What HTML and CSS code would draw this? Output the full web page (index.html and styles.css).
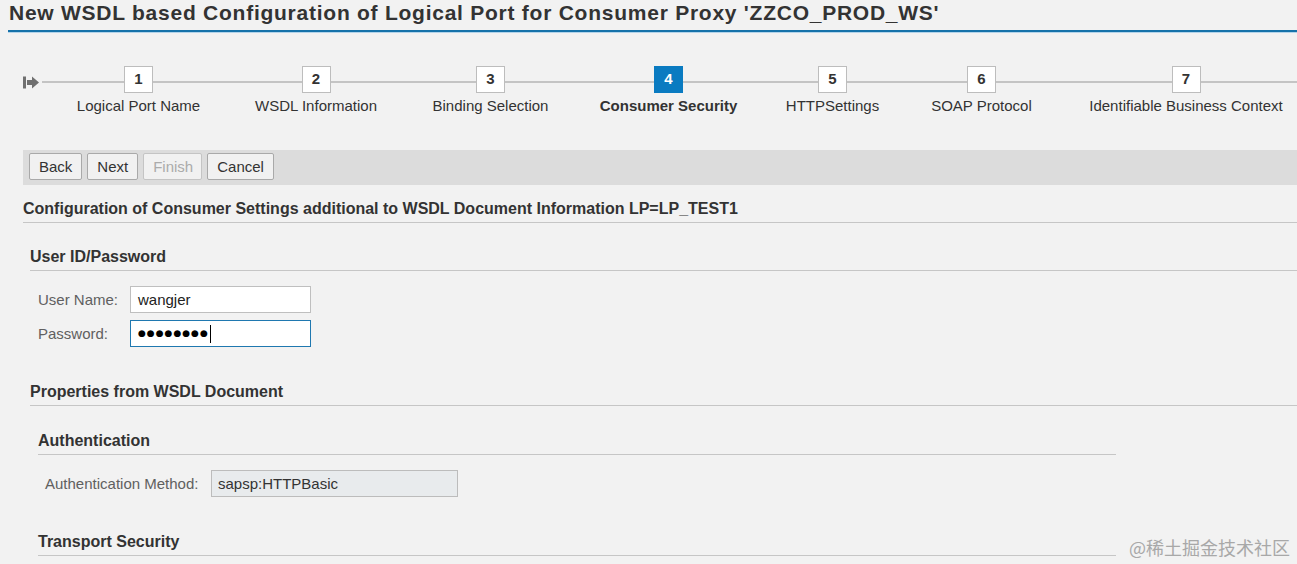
FILE: index.html
```html
<!DOCTYPE html>
<html lang="en">
<head>
<meta charset="utf-8">
<title>New WSDL based Configuration of Logical Port</title>
<link rel="stylesheet" href="styles.css">
</head>
<body>
<div class="page">
  <header class="title-bar">
    <h1 class="title">New WSDL based Configuration of Logical Port for Consumer Proxy 'ZZCO_PROD_WS'</h1>
  </header>

  <nav class="roadmap">
    <svg class="roadmap-start" width="17" height="13" viewBox="0 0 17 13" aria-hidden="true">
      <rect x="0" y="0.5" width="3" height="12" fill="#707070"/>
      <path d="M4 4H9V0.5L16 6.5L9 12.5V9H4Z" fill="#707070"/>
    </svg>
    <ol class="steps">
      <li class="step"><span class="step-num">1</span><span class="step-label">Logical Port Name</span></li>
      <li class="step"><span class="step-num">2</span><span class="step-label">WSDL Information</span></li>
      <li class="step"><span class="step-num">3</span><span class="step-label">Binding Selection</span></li>
      <li class="step step-active"><span class="step-num">4</span><span class="step-label">Consumer Security</span></li>
      <li class="step"><span class="step-num">5</span><span class="step-label">HTTPSettings</span></li>
      <li class="step"><span class="step-num">6</span><span class="step-label">SOAP Protocol</span></li>
      <li class="step"><span class="step-num">7</span><span class="step-label">Identifiable Business Context</span></li>
    </ol>
  </nav>

  <div class="toolbar">
    <button class="btn" type="button">Back</button>
    <button class="btn" type="button">Next</button>
    <button class="btn btn-disabled" type="button" disabled>Finish</button>
    <button class="btn" type="button">Cancel</button>
  </div>

  <main class="content">
    <h2 class="section-title">Configuration of Consumer Settings additional to WSDL Document Information LP=LP_TEST1</h2>

    <section class="group group-user">
      <h3 class="group-title">User ID/Password</h3>
      <div class="form-grid">
        <label class="form-label">User Name:</label>
        <div class="field">wangjer</div>
        <label class="form-label">Password:</label>
        <div class="field field-focus"><span class="dots">●●●●●●●●</span><span class="caret"></span></div>
      </div>
    </section>

    <section class="group group-props">
      <h3 class="group-title">Properties from WSDL Document</h3>
      <section class="subgroup subgroup-auth">
        <h4 class="subgroup-title">Authentication</h4>
        <div class="form-grid form-grid-auth">
          <label class="form-label">Authentication Method:</label>
          <div class="field field-readonly">sapsp:HTTPBasic</div>
        </div>
      </section>
      <section class="subgroup subgroup-transport">
        <h4 class="subgroup-title">Transport Security</h4>
      </section>
    </section>
  </main>

  <div class="watermark">@稀土掘金技术社区</div>
</div>
</body>
</html>
```

FILE: styles.css
```css
html, body {
  margin: 0;
  padding: 0;
  background: #f2f2f2;
}

body {
  font-family: "Liberation Sans", Arial, sans-serif;
  color: #333;
  overflow: hidden;
}

.page {
  position: relative;
  width: 1297px;
  height: 564px;
}

/* Title */
.title-bar {
  margin-left: 8px;
  height: 30px;
  border-bottom: 2px solid #1672aa;
  box-shadow: 0 1px 0 #b4d4ea;
}

.title {
  margin: 0;
  padding-left: 1px;
  font-size: 21px;
  line-height: 25px;
  letter-spacing: 0.75px;
  font-weight: 700;
  color: #333;
  white-space: nowrap;
}

/* Roadmap */
.roadmap {
  display: flex;
  align-items: flex-start;
  padding: 34px 0 0 23px;
  background: linear-gradient(#c4c4c4, #c4c4c4) no-repeat 42px 49px / 100% 2px;
}

.roadmap-start {
  display: block;
  flex: none;
  margin-top: 10px;
}

.steps {
  display: grid;
  grid-template-columns: 177px 178px 171px 185px 143px 155px 254px;
  align-items: start;
  margin: 0 0 0 10px;
  padding: 0;
  list-style: none;
}

.step {
  display: flex;
  flex-direction: column;
  align-items: center;
}

.step-num {
  box-sizing: border-box;
  width: 29px;
  height: 27px;
  border: 1px solid #bdbdbd;
  background: #fff;
  font-size: 15px;
  line-height: 23px;
  font-weight: 700;
  text-align: center;
  color: #333;
}

.step-label {
  margin-top: 4px;
  font-size: 15px;
  line-height: 18px;
  white-space: nowrap;
  color: #333;
}

.step-active .step-num {
  background: #0a7bc1;
  border-color: #0a7bc1;
  color: #fff;
}

.step-active .step-label {
  font-weight: 700;
}

/* Toolbar */
.toolbar {
  display: flex;
  align-items: flex-start;
  gap: 5px;
  box-sizing: border-box;
  height: 35px;
  margin: 35px 0 0 23px;
  padding: 3px 6px;
  background: #dcdcdc;
}

.btn {
  box-sizing: border-box;
  height: 27px;
  margin: 0;
  padding: 0 9px;
  border: 1px solid #a9a9a9;
  border-radius: 2px;
  background: #f1f1f1;
  font-family: "Liberation Sans", Arial, sans-serif;
  font-size: 15px;
  line-height: 25px;
  color: #333;
}

.btn-disabled {
  padding: 0 8px 0 9px;
  border-color: #c4c4c4;
  color: #ababab;
}

/* Content */
.content {
  padding-left: 23px;
}

.section-title,
.group-title,
.subgroup-title {
  margin: 0;
  font-size: 16px;
  line-height: 18px;
  font-weight: 700;
  color: #333;
  padding-bottom: 4px;
  border-bottom: 1px solid #c6c6c6;
  white-space: nowrap;
}

.section-title {
  margin-top: 15px;
}

.group {
  margin-left: 7px;
}

.group-user .group-title {
  margin-top: 25px;
}

.group-props .group-title {
  margin-top: 36px;
}

.subgroup {
  margin-left: 8px;
  width: 1078px;
}

.subgroup-auth .subgroup-title {
  margin-top: 26px;
}

.subgroup-transport .subgroup-title {
  margin-top: 36px;
}

.form-grid {
  display: grid;
  grid-template-columns: 92px 181px;
  row-gap: 7px;
  align-items: center;
  margin-top: 15px;
  padding-left: 8px;
}

.form-grid-auth {
  grid-template-columns: 166px 247px;
  padding-left: 7px;
}

.form-label {
  font-size: 15px;
  line-height: 18px;
  color: #606060;
  white-space: nowrap;
}

.field {
  box-sizing: border-box;
  height: 27px;
  padding: 0 7px;
  border: 1px solid #bfbfbf;
  background: #fff;
  font-size: 15px;
  line-height: 25px;
  color: #222;
  display: flex;
  align-items: center;
}

.field-focus {
  border-color: #1f78b0;
}

.dots {
  font-family: "DejaVu Sans", sans-serif;
  font-size: 9px;
  letter-spacing: 1px;
  color: #000;
}

.caret {
  display: inline-block;
  width: 1px;
  height: 18px;
  margin-left: 1px;
  background: #000;
}

.field-readonly {
  padding-left: 6px;
  background: #e8ebed;
  border-color: #bcbcbc;
  color: #333;
}

.watermark {
  position: absolute;
  right: 7px;
  top: 535px;
  font-family: "Noto Sans CJK SC", sans-serif;
  font-size: 18px;
  line-height: 24px;
  color: #a8a8a8;
  white-space: nowrap;
}
```
